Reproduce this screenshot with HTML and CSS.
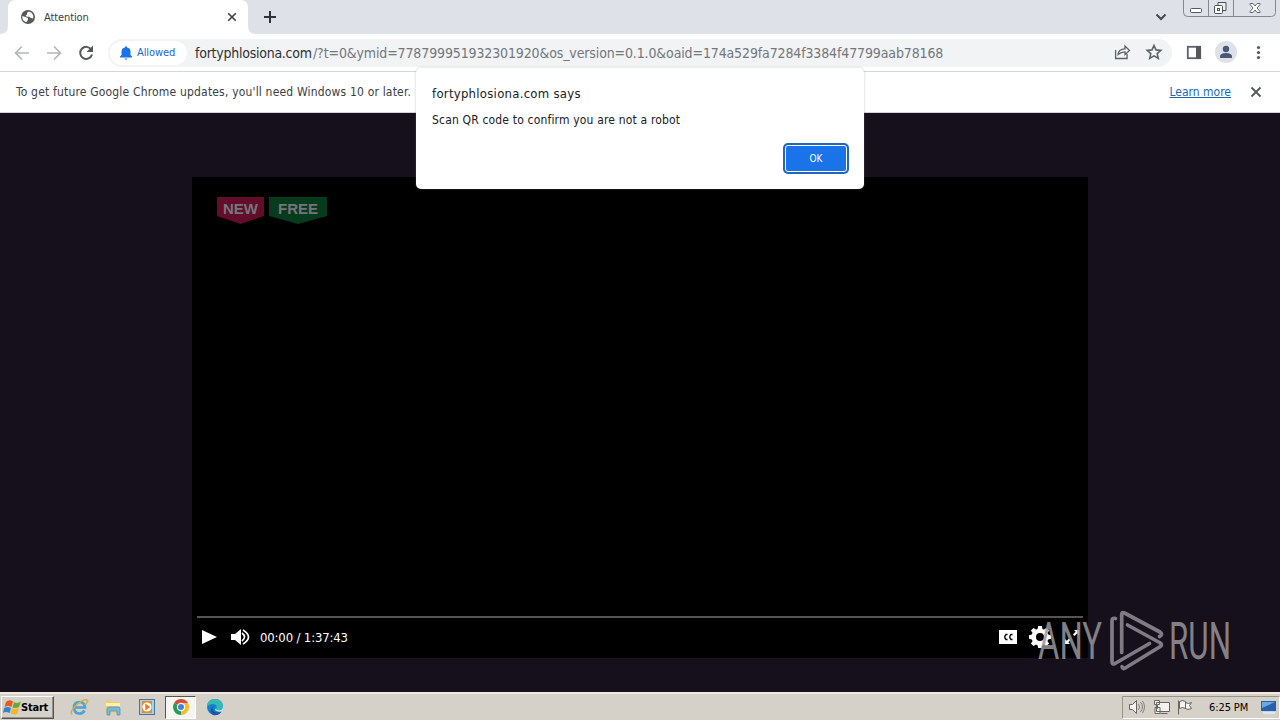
FILE: index.html
```html
<!DOCTYPE html>
<html lang="en"><head><meta charset="utf-8"><title>Attention</title><link rel="stylesheet" href="styles.css"></head>
<body><div class="desktop">
<header class="tabs">
 <svg class="tab-shape" width="264" height="34"><path d="M0 34Q8 34 8 26V8Q8 0 16 0H240Q248 0 248 8V26Q248 34 256 34Z" fill="#fff"/></svg>
 <svg class="globe" width="16" height="16" viewBox="0 0 16 16"><circle cx="8" cy="8" r="7" fill="#55585c"/><path d="M2.4 7 6 8.2l2 .8-.2 2-1.4 2.2A5.5 5.5 0 0 1 2.4 7ZM8.7 2.6 7 4v1.5L5.3 7l2 .7h2l1.4 1.4 2.5.4A5.5 5.5 0 0 0 8.7 2.6Z" fill="#fff"/></svg>
 <span class="tab-title">Attention</span>
 <svg class="tab-x" width="10" height="10"><path d="m1.2 1.2 7.6 7.6m0-7.6L1.2 8.8" stroke="#3c4043" stroke-width="1.6"/></svg>
 <svg class="plus" width="12" height="12"><path d="M6 0v12M0 6h12" stroke="#303238" stroke-width="2"/></svg>
 <svg class="chev" width="12" height="8"><path d="m1.5 1.5 4.5 4.5 4.5-4.5" fill="none" stroke="#45484d" stroke-width="2"/></svg>
 <svg class="winbtns" width="94" height="18" fill="none" stroke="#85888f"><path d="M.5 0v12.5q0 4 4 4h84q4 0 4-4V0M25.500 0v16M50.500 0v16"/><rect x="7.500" y="8.500" width="11" height="4" rx="1" fill="#fff" stroke="#55585f"/><g stroke="#4d5058"><path d="M35 5V2.500h8v8h-3" fill="#eee"/><rect x="31.500" y="5.500" width="8" height="8" rx="1" fill="#fff"/><rect x="34.500" y="8.500" width="2" height="2"/></g><path d="M67 3.500h3l2 2.500 2-2.500h3v1L74 8l3 3.500v1h-3L72 10l-2 2.500h-3v-1L70 8l-3-3.500Z" fill="#fff" stroke="#666970"/></svg>
</header>
<nav class="toolbar">
 <svg class="nav-icons" width="96" height="38" fill="none" stroke-width="2"><path d="M29 19H16m6-6.500L15.500 19l6.500 6.500M47 19h13m-6-6.500 6.500 6.500-6.500 6.500" stroke="#b5b7ba" stroke-width="1.700"/><path d="M91.200 15.500A6 6 0 1 0 92 20.500" stroke="#55585c"/><path d="M93 11.500v6.500h-6.500Z" fill="#55585c"/></svg>
 <div class="address">
  <div class="chip"><svg width="12" height="14"><path d="M0 11.500v-1l1.500-1.500V5.500Q1.500 2.300 5 1.600V.8q1-1.200 2 0v.8q3.500.7 3.500 3.900V9l1.500 1.500v1ZM4.500 12.400h3q-1.500 2.500-3 0Z" fill="#1a73e8"/></svg><span class="allowed">Allowed</span></div>
  <div class="url"><span class="host">fortyphlosiona.com</span><span class="query">/?t=0&amp;ymid=778799951932301920&amp;os_version=0.1.0&amp;oaid=174a529fa7284f3384f47799aab78168</span></div>
 </div>
 <svg class="actions" width="170" height="38" fill="none" stroke="#5f6368" stroke-width="1.300"><path d="M5.600 17v8.500h11.500V21M8 21.500q.5-5.500 7-5.700V13l4.500 4.500-4.500 4v-2.700q-4 0-7 2.700Z"/><path d="m44 12.500 2 4.400 4.800.5-3.600 3.200 1.100 4.800L44 22.900l-4.300 2.500 1.100-4.800-3.600-3.200 4.800-.5Z" stroke-width="1.600"/><rect x="77.800" y="13.800" width="12.400" height="11.400" stroke-width="1.800"/><path d="M86 13h5v13h-5Z" fill="#55585c" stroke="none"/><g stroke="none"><circle cx="116" cy="19" r="11" fill="#dde1e8"/><circle cx="116" cy="16" r="3.200" fill="#4a5878"/><path d="M110 25v-1.500q0-3.500 6-3.500t6 3.500V25Z" fill="#4a5878"/><g fill="#55585c"><circle cx="148.500" cy="14.500" r="1.600"/><circle cx="148.500" cy="19.500" r="1.600"/><circle cx="148.500" cy="24.500" r="1.600"/></g></g></svg>
</nav>
<div class="notice"><span class="update">To get future Google Chrome updates, you'll need Windows 10 or later.</span><span class="learn">Learn more</span><svg width="12" height="12"><path d="m1.500 1.500 9 9m0-9-9 9" stroke="#55585c" stroke-width="1.900"/></svg></div>
<main class="page"><section class="player">
 <div class="badges"><div class="badge new"><span>NEW</span></div><div class="badge free"><span>FREE</span></div></div>
 <div class="controls"><div class="progress"></div><div class="control-row">
  <svg width="50" height="20"><path d="M1 3v14l15-7Z" fill="#fff"/><path d="M30 7h4l6-5v16l-6-5h-4Z" fill="#fff"/><path d="M41 6q5 4 0 8M42 3q11 7 0 14" fill="none" stroke="#fff" stroke-width="1.700"/></svg>
  <span class="time">00:00 / 1:37:43</span>
  <svg class="right-icons" width="84" height="24" fill="#fff"><rect x="0" y="5" width="18" height="14"/><path d="M8.500 9.500H7q-2.500 2.500 0 5h1.500m5-5H12q-2.500 2.500 0 5h1.500" fill="none" stroke="#000" stroke-width="1.300"/><g transform="translate(41 12)"><circle r="6.300" fill="none" stroke="#fff" stroke-width="4.600"/><g id="cog"><path d="M-2.500-8l.7-3h3.600l.7 3ZM-2.500 8l.7 3h3.600l.7-3ZM-8-2.500l-3 .7v3.600l3 .7ZM8-2.500l3 .7v3.600l-3 .7Z"/></g><use href="#cog" transform="rotate(45)"/></g><path d="M75 5h5v5l-1.700-1.700-2.800 2.800-1.600-1.600 2.800-2.800Zm-4 14h-5v-5l1.700 1.700 2.300-2.300 1.600 1.600-2.300 2.300Z"/></svg>
 </div></div></section></main>
<footer class="taskbar">
 <div class="start"><svg width="19" height="19" viewBox="0 0 19 19"><path d="M3 4q3-3 7-.5L8.500 9Q5 7 1.500 9Z" fill="#e65b22"/><path d="M11 4q3 2 7-.5L16 9q-3 2-6.500.2Z" fill="#69aa35"/><path d="M1 10q4-2 7 0l-1.400 5Q3 13 0 15Z" fill="#3284ce"/><path d="M9 10q3 2 7 0l-1.500 5.500q-3 2-7-.3Z" fill="#f2b52b"/></svg><b>Start</b></div>
 <div class="apps">
 <svg width="20" height="20"><path d="M15.500 13.500q-2 3.500-5.500 3-5-.5-5-6t5.500-5.500q5 0 5.500 5.500H6" fill="none" stroke="#4aa5dc" stroke-width="2.700"/><path d="M3 17.500Q0 15 7 8.500T18 3q2 1-2 5" fill="none" stroke="#d8ad39" stroke-width="1.500"/></svg>
 <svg width="20" height="20"><path d="M3 5q0-2 3-2l1 2h9l1 11H3Z" fill="#edcc71"/><path d="M3 6h14v3H3Z" fill="#fff1ac"/><path d="M4 18v-6q0-2 2-2h9q2 0 2 2v6h-3v-4H7v4Z" fill="#78b8da" stroke="#4c91b8" stroke-width=".7"/></svg>
 <svg width="20" height="20"><rect x="2.500" y="2.500" width="15" height="15" fill="#a9d0ea" stroke="#3c79a8"/><path d="M5 4h10v12H5Z" fill="#ee8a22"/><circle cx="10" cy="10" r="4.600" fill="#fff"/><path d="M8.300 6.500v7l5-3.500Z" fill="#e87a18"/></svg>
 <div class="active-app"><svg width="18" height="18"><path d="M9 9 2.100 5A8 8 0 0 1 16 5Z" fill="#dc4938"/><path d="M9 9 2.100 5A8 8 0 0 0 9 17Z" fill="#299b58"/><path d="M9 9 9 17A8 8 0 0 0 16 5H9Z" fill="#f4bf2c"/><circle cx="9" cy="9" r="4.200" fill="#fff"/><circle cx="9" cy="9" r="3" fill="#477fd8"/></svg></div>
 <svg class="edge" width="20" height="20"><circle cx="10" cy="10" r="8" fill="#1680cf"/><path d="M2 10q0-8 8-8t8 8q-1 3-4 3h-3q2-6-3-6-4 0-6 3Z" fill="#36b9b5"/><path d="M8 9q-2 8 8 6-3 4-8 3-5-3 0-9Z" fill="#1757a3"/><path d="M11 9q-2 4 2 4 4 1 5-3v4q-5 2-8-1Z" fill="#d6e5ec"/></svg>
 </div>
 <div class="tray"><svg width="74" height="18" fill="#f4f3ef" stroke="#66655f"><path d="M1.500 6.500h3l4-4v13l-4-4h-3Z"/><path d="M10.500 6q2 3 0 6m2-8q4 5 0 10m2-11q4 6 0 12" fill="none" stroke="#85837d"/><path d="M28.500 4.500h13v9h-13Zm4 11h7M27 9.500h5v6h-5ZM26.500 2.500h5v4h-2v4h-1v-4h-2ZM50.500 2.500v14M51.500 3.500q3-2 6 0v7q-3-2-6 0Zm6 1q3 2 6 0l-2 3 2 3q-4 2-6 0Z"/></svg><span class="clock">6:25 PM</span><svg class="show-desktop" width="17" height="16"><path d="M1 2h15v10H1Z" fill="#2561ae"/><path d="M2 3h13L2 9Z" fill="#69a9e5"/><path d="M3 13h12v2H3Z" fill="#dbe8f2"/></svg></div>
</footer>
<section class="dialog"><h1><span>fortyphlosiona.com says</span></h1><p><span>Scan QR code to confirm you are not a robot</span></p><button>OK</button></section>
<svg class="watermark" width="210" height="76" viewBox="1035 605 210 76"><g class="brand" fill="#99949c"><text x="1038" y="659" textLength="64" lengthAdjust="spacingAndGlyphs">ANY</text><text x="1169" y="659" textLength="62" lengthAdjust="spacingAndGlyphs">RUN</text></g><g fill="none" stroke="#928d96" stroke-width="3.700" stroke-linejoin="round" stroke-linecap="round"><path d="M1115.500 618.500Q1112 617.500 1112 621V662Q1112 665 1115 663.500L1149.500 643.500"/><path d="M1121.700 652.500V614.500Q1121.700 611.500 1124.500 613L1160 632Q1163.500 634.500 1159.500 636.500"/><path d="M1127.500 625 1159.500 642.500Q1163.500 644.500 1159.500 647L1126 667.500Q1122.500 670 1122 666.500"/></g></svg>
</div></body></html>
```
FILE: styles.css
```css
*{box-sizing:border-box}
body{margin:0;font-family:"DejaVu Sans Condensed","DejaVu Sans",sans-serif;font-stretch:condensed}
svg{display:block;flex-shrink:0}
.desktop{position:relative;width:1280px;height:720px;overflow:hidden;display:flex;flex-direction:column}
.tabs{height:34px;background:#dee1e8;display:flex;align-items:center;position:relative;flex-shrink:0}
.tab-shape{position:absolute;left:0;top:0}
.globe{position:relative;margin-left:20px}
.tab-title{position:relative;margin-left:8px;width:184px;font-size:11px;letter-spacing:-.1px;color:#3c4043}
.tab-x{position:relative;margin-left:-1px}
.plus{margin-left:27px}
.chev{margin-left:auto}
.winbtns{align-self:flex-start;margin-left:16px;margin-right:3px}
.toolbar{height:38px;border-bottom:1px solid #d5d6d9;background:#fff;display:flex;align-items:center;flex-shrink:0;position:relative}
.address{height:28px;width:1064px;margin-left:12px;background:#f1f3f4;border-radius:14px;display:flex;align-items:center;white-space:nowrap}
.chip{height:24px;width:77px;margin-left:2px;border-radius:12px;background:#fff;display:flex;align-items:center;padding-left:10px;gap:5px}
.allowed{font-size:11px;color:#1967d2;letter-spacing:-.1px}
.url{margin-left:8px;font-size:14px;display:flex}
.host{color:#303134;width:118px;letter-spacing:-.25px}
.query{color:#74777c;letter-spacing:-.13px}
.actions{position:absolute;left:1110px;top:-1px}
.notice{height:41px;background:#fff;border-bottom:1px solid #d4d3d7;display:flex;align-items:center;padding:0 18px 0 16px;font-size:12px;color:#3c4043;flex-shrink:0}
.update{letter-spacing:.18px}
.learn{color:#1967b5;text-decoration:underline;margin-left:auto;margin-right:19px}
.page{height:579px;background:#15101b;padding-top:64px;display:flex;justify-content:center;align-items:flex-start}
.player{width:896px;height:481px;background:#000;display:flex;flex-direction:column;justify-content:space-between}
.badges{display:flex;gap:5px;padding:20px 25px}
.badge{height:27px;padding-top:3px;text-align:center;clip-path:polygon(0 0,100% 0,100% 70%,50% 100%,0 70%);font:bold 15px "Liberation Sans",sans-serif;color:#77757a}
.new{width:47px;background:#620d2a}
.free{width:58px;background:#073b1d}
.controls{height:42px;padding:0 5px}
.progress{height:2px;background:#555}
.control-row{height:38px;display:flex;align-items:center;padding-left:4px}
.time{font-size:13px;color:#fff;margin-left:9px;letter-spacing:-.15px}
.right-icons{margin-left:auto}
.taskbar{height:28px;background:#d5d1c8;border-top:2px solid #eeebe5;display:flex;align-items:center;flex-shrink:0}
.start{width:53px;height:23px;margin-left:1px;border:1px solid;border-color:#fff #55534f #55534f #fff;box-shadow:inset -1px -1px #96938c;display:flex;align-items:center;padding-left:1px}
.start b{font-size:11px;letter-spacing:-.2px;margin-left:-1px}
.apps{display:flex;align-items:center;margin-left:15px;gap:14px}
.active-app{width:31px;height:23px;margin-left:-6px;margin-right:-6px;background:#f7f5f1;border:1px solid;border-color:#55534f #fff #fff #55534f;display:grid;place-items:center}
.edge{margin-left:1px}
.tray{margin-left:auto;width:158px;height:23px;border:1px solid;border-color:#99958d #fff #fff #99958d;display:flex;align-items:center;padding:0 2px 0 5px}
.clock{font-size:11px;margin-left:7px;letter-spacing:-.1px}
.show-desktop{margin-left:auto}
.dialog{position:absolute;left:416px;top:68px;width:448px;height:121px;background:#fff;border-radius:5px;box-shadow:0 0 3px #7776;padding:17px 16px 0;display:flex;flex-direction:column;color:#202124}
.dialog h1{font-size:13px;font-weight:400;margin:0;line-height:18px;letter-spacing:.27px}
.dialog p{font-size:12px;margin:8px 0 0;line-height:18px;letter-spacing:.17px}
.dialog button{align-self:flex-end;width:62px;height:27px;margin:16px 1px 0;border:1px solid #fff;border-radius:3px;box-shadow:0 0 0 2px #2466bd;background:#1a73e8;color:#fff;font:10px "DejaVu Sans Condensed","DejaVu Sans",sans-serif}
.watermark{position:absolute;left:1035px;top:605px;opacity:.85}
.brand{font:400 51px Roboto,sans-serif}
```
